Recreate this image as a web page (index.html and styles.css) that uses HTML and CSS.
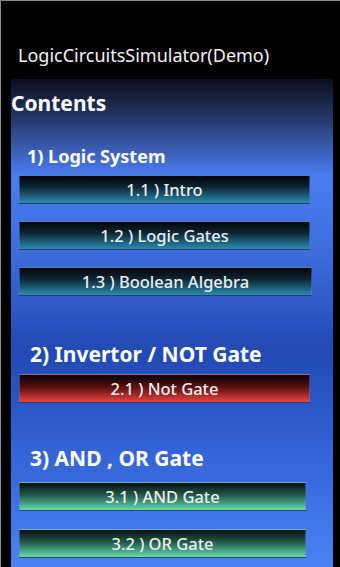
FILE: index.html
```html
<!DOCTYPE html>
<html>
<head>
<meta charset="utf-8">
<link rel="stylesheet" href="styles.css">
</head>
<body>
<div class="screen">
  <div class="title">LogicCircuitsSimulator(Demo)</div>
  <div class="panel">
    <div class="contents">Contents</div>
    <div class="section s1">1) Logic System</div>
    <div class="btn teal b1">1.1 ) Intro</div>
    <div class="btn teal b2">1.2 ) Logic Gates</div>
    <div class="btn teal b3 wide">1.3 ) Boolean Algebra</div>
    <div class="section s2">2) Invertor / NOT Gate</div>
    <div class="btn red b4">2.1 ) Not Gate</div>
    <div class="section s3">3) AND , OR Gate</div>
    <div class="btn green b5 narrow">3.1 ) AND Gate</div>
    <div class="btn green b6 narrow">3.2 ) OR Gate</div>
  </div>
</div>
</body>
</html>
```

FILE: styles.css
```css
html, body {
  margin: 0;
  padding: 0;
  background: #000;
}
body {
  font-family: "Noto Sans", "Open Sans", sans-serif;
  color: #fff;
}
.screen {
  width: 340px;
  height: 567px;
  box-sizing: border-box;
  border-top: 1px solid #8c8c8c;
  border-left: 1px solid #8c8c8c;
  overflow: hidden;
  display: flex;
  flex-direction: column;
}
.title {
  margin: 0;
  padding: 42px 0 0 17px;
  height: 36px;
  font-size: 18px;
  line-height: 24px;
  color: #f2f2f2;
}
.panel {
  margin-left: 10px;
  width: 322px;
  flex: 1;
  display: flex;
  flex-direction: column;
  align-items: flex-start;
  background: linear-gradient(to bottom,
    #0a0e1c 0px,
    #26386a 40px,
    #4a7df2 96px,
    #3c6ada 180px,
    #2249b4 272px,
    #3160d2 360px,
    #4c82f4 488px);
}
.contents {
  font-weight: 700;
  font-size: 21px;
  line-height: 26px;
  margin-top: 11px;
}
.section {
  font-weight: 700;
  margin-left: 16px;
}
.s1 {
  font-size: 18px;
  line-height: 24px;
  margin-top: 28px;
}
.s2 {
  font-size: 21px;
  line-height: 26px;
  margin-top: 45px;
  margin-left: 19px;
}
.s3 {
  font-size: 21px;
  line-height: 26px;
  margin-top: 42px;
  margin-left: 19px;
}
.btn {
  margin-left: 8px;
  width: 291px;
  height: 29px;
  box-sizing: border-box;
  display: flex;
  align-items: center;
  justify-content: center;
  font-size: 16.5px;
  font-weight: 500;
  color: #eaf0f2;
  border: 1px solid rgba(90, 130, 220, 0.45);
}
.btn.wide { width: 293px; }
.btn.narrow { width: 287px; }
.teal {
  background: linear-gradient(to bottom, #020407 0%, #0d2432 40%, #2a8bb0 100%);
}
.red {
  background: linear-gradient(to bottom, #0a0000 0%, #5a1010 45%, #ea4242 100%);
}
.green {
  background: linear-gradient(to bottom, #08100e 0%, #24584a 45%, #64dcaf 100%);
}
.b1 { margin-top: 7px; }
.b2 { margin-top: 17px; }
.b3 { margin-top: 17px; }
.b4 { margin-top: 7px; }
.b5 { margin-top: 11px; }
.b6 { margin-top: 18px; }
```
